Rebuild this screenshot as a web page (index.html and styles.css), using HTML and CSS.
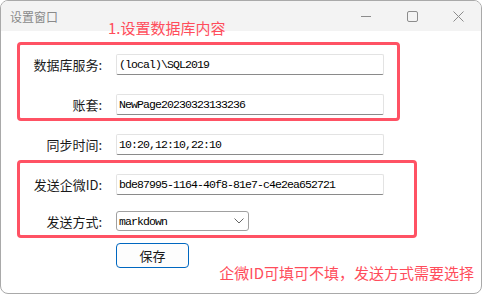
FILE: index.html
```
<!DOCTYPE html>
<html lang="zh-CN">
<head>
    <meta charset="UTF-8">
    <meta name="viewport" content="width=device-width, initial-scale=1.0">
    <title>设置窗口</title>
    <link rel="stylesheet" href="styles.css">
</head>
<body>

<div class="window">
    <div class="titlebar">
        <span class="title">设置窗口</span>
        <div class="controls">
            <div class="ctl">
                <svg width="10" height="10" viewBox="0 0 10 10"><path d="M0 5.5H10" stroke="#8c8c8c" stroke-width="1"/></svg>
            </div>
            <div class="ctl">
                <svg width="11" height="11" viewBox="0 0 11 11"><rect x="0.5" y="0.5" width="10" height="10" rx="1.5" fill="none" stroke="#8c8c8c" stroke-width="1"/></svg>
            </div>
            <div class="ctl">
                <svg width="11" height="11" viewBox="0 0 11 11"><path d="M0.5 0.5L10.5 10.5M10.5 0.5L0.5 10.5" stroke="#8c8c8c" stroke-width="1"/></svg>
            </div>
        </div>
    </div>

    <div class="client">
        <div class="group group-db">
            <div class="field">
                <span class="label">数据库服务:</span>
                <div class="textbox">(local)\SQL2019</div>
            </div>
            <div class="field">
                <span class="label">账套:</span>
                <div class="textbox">NewPage20230323133236</div>
            </div>
        </div>

        <div class="field field-plain">
            <span class="label">同步时间:</span>
            <div class="textbox">10:20,12:10,22:10</div>
        </div>

        <div class="group group-send">
            <div class="field">
                <span class="label">发送企微ID:</span>
                <div class="textbox">bde87995-1164-40f8-81e7-c4e2ea652721</div>
            </div>
            <div class="field field-select">
                <span class="label">发送方式:</span>
                <div class="combo">
                    <span>markdown</span>
                    <svg width="10" height="6" viewBox="0 0 10 6"><path d="M0.5 0.5L5 5L9.5 0.5" fill="none" stroke="#666" stroke-width="1"/></svg>
                </div>
            </div>
        </div>

        <div class="actions">
            <div class="save">保存</div>
        </div>
    </div>

    <!-- annotations drawn over the dialog -->
    <div class="note note-top">1.设置数据库内容</div>
    <div class="note note-bottom">企微ID可填可不填，发送方式需要选择</div>
</div>

</body>
</html>
```

FILE: styles.css
```
body {
    margin: 0;
    background-color: #ffffff;
    font-family: "Noto Sans CJK SC", "Noto Sans", sans-serif;
}
.window {
    position: relative;
    width: 482px;
    height: 294px;
    box-sizing: border-box;
    border: 1px solid #a9a9a9;
    border-radius: 8px;
    background-color: #ffffff;
    overflow: hidden;
}
.titlebar {
    height: 30px;
    background-color: #f3f3f3;
    display: flex;
    align-items: center;
    justify-content: space-between;
}
.title {
    margin-left: 9px;
    font-size: 12px;
    color: #8a8a8a;
}
.controls {
    display: flex;
    height: 100%;
}
.ctl {
    width: 46px;
    display: flex;
    align-items: center;
    justify-content: center;
}
.client {
    padding: 11px 0 0 16px;
}
.group {
    border: 3px solid #ff5264;
    border-radius: 4px;
    display: flex;
    flex-direction: column;
}
.group-db {
    width: 377px;
    padding: 9px 0 3px 0;
    gap: 19px;
}
.group-send {
    width: 394px;
    margin-top: 5px;
    padding: 11px 0 4px 0;
    gap: 16px;
}
.field {
    display: flex;
    align-items: center;
    height: 21px;
}
.field-plain {
    margin-top: 13px;
    padding-left: 3px;
}
.field-select {
    height: 20px;
}
.label {
    width: 82px;
    text-align: right;
    font-size: 13px;
    color: #1a1a1a;
    margin-right: 14px;
}
.textbox {
    width: 268px;
    height: 21px;
    box-sizing: border-box;
    border: 1px solid #e3e3e3;
    border-bottom-color: #8a8a8a;
    border-radius: 2px;
    padding-left: 2px;
    font-family: "Liberation Mono", monospace;
    font-size: 11.5px;
    letter-spacing: -0.9px;
    line-height: 19px;
    color: #000000;
    white-space: nowrap;
    overflow: hidden;
}
.combo {
    width: 133px;
    height: 20px;
    box-sizing: border-box;
    border: 1px solid #a0a0a0;
    border-radius: 3px;
    padding: 0 4px 0 2px;
    display: flex;
    align-items: center;
    justify-content: space-between;
    font-family: "Liberation Mono", monospace;
    font-size: 11.5px;
    letter-spacing: -0.9px;
    color: #000000;
}
.actions {
    margin-top: 5px;
    padding-left: 99px;
}
.save {
    width: 73px;
    height: 25px;
    box-sizing: border-box;
    border: 1px solid #0067c0;
    border-radius: 4px;
    background-color: #fdfdfd;
    display: flex;
    align-items: center;
    justify-content: center;
    font-size: 13px;
    color: #1a1a1a;
}
.note {
    position: absolute;
    color: #ff4d5b;
    font-size: 15px;
    line-height: 18px;
    white-space: nowrap;
}
.note-top {
    left: 107px;
    top: 18px;
}
.note-bottom {
    right: 7px;
    top: 263px;
}
```
